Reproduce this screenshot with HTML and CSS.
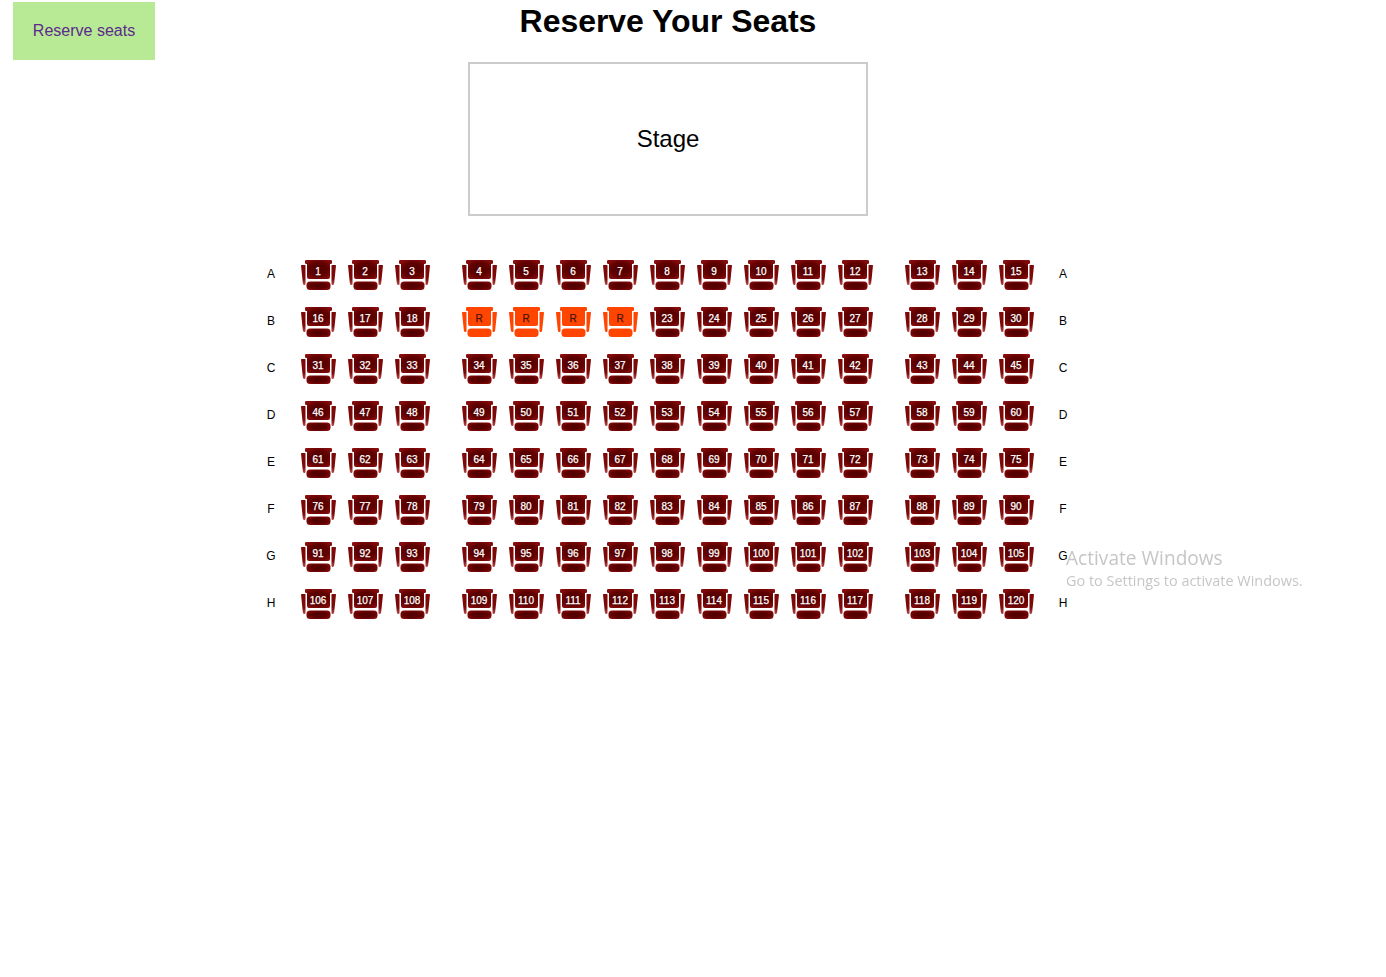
FILE: index.html
```html
<!DOCTYPE html>
<html lang="en">
<head>
    <meta charset="UTF-8">
    <meta name="viewport" content="width=device-width, initial-scale=1.0">
    <title>Reserve Your Seats</title>
    <link rel="stylesheet" href="styles.css">
</head>
<body>
    <!-- seat drawing, reused by every seat -->
    <svg class="defs" width="0" height="0" aria-hidden="true">
        <defs>
            <radialGradient id="seatFill" cx="50%" cy="50%" r="62%">
                <stop offset="0%" stop-color="#500000"/>
                <stop offset="55%" stop-color="#5e0000"/>
                <stop offset="100%" stop-color="#8c0e0e"/>
            </radialGradient>
            <linearGradient id="armFill" x1="0" y1="0" x2="0" y2="1">
                <stop offset="0%" stop-color="#7c0808"/>
                <stop offset="70%" stop-color="#7c0808"/>
                <stop offset="100%" stop-color="#b85050"/>
            </linearGradient>
            <symbol id="seatShape" viewBox="0 0 36 30">
                <path class="seat-back" d="M4 1.200Q4 0 5.200 0H29.800Q31 0 31 1.200V3Q31 4 29.500 4H29V17Q29 19 27 19H8Q6 19 6 17V4H5.500Q4 4 4 3Z"/>
                <path class="seat-arm" d="M0 5.600Q0 5 .6 5H3.900Q4.500 5 4.500 5.600V21Q4.800 24.500 4 25H3Q2 24.800 1.800 23Z"/>
                <path class="seat-arm" d="M35 5.600Q35 5 34.400 5H31.100Q30.500 5 30.500 5.600V21Q30.200 24.500 31 25H32Q33 24.800 33.200 23Z"/>
                <rect class="seat-cushion" x="5.500" y="21.500" width="24" height="8.500" rx="3.500"/>
            </symbol>
        </defs>
    </svg>

    <main class="page">
        <header class="top-bar">
            <button class="reserve-btn" type="button">Reserve seats</button>
            <h1 class="title">Reserve Your Seats</h1>
        </header>

        <div class="stage">Stage</div>

        <div id="seatMap" class="seat-map"></div>
    </main>

    <div class="watermark">
        <div class="watermark-title">Activate Windows</div>
        <div class="watermark-text">Go to Settings to activate Windows.</div>
    </div>

    <script src="script.js"></script>
</body>
</html>
```

FILE: styles.css
```css
body {
    margin: 0;
    padding: 0;
    font-family: "Liberation Sans", Arial, sans-serif;
    background-color: #fff;
    color: #000;
}

.defs {
    display: block;
    height: 0;
}

.page {
    width: 1336px;
}

.top-bar {
    display: grid;
    grid-template-columns: 1fr auto 1fr;
    align-items: start;
    height: 60px;
    padding-top: 2px;
    box-sizing: border-box;
}

.reserve-btn {
    width: 142px;
    height: 58px;
    margin-left: 13px;
    padding: 0;
    border: none;
    background-color: #b8e994;
    color: #5b2a8c;
    font-family: inherit;
    font-size: 16px;
    cursor: pointer;
}

.title {
    margin: 0;
    font-size: 32px;
    line-height: 38px;
    font-weight: bold;
    letter-spacing: -0.05px;
}

.stage {
    display: flex;
    align-items: center;
    justify-content: center;
    box-sizing: border-box;
    width: 400px;
    height: 154px;
    margin: 2px auto 0;
    border: 2px solid #ccc;
    font-size: 24px;
}

.seat-map {
    display: flex;
    flex-direction: column;
    gap: 17px;
    width: 820px;
    margin: 44px 0 0 257px;
}

.seat-row {
    display: flex;
    align-items: center;
    gap: 31px;
    height: 30px;
}

.row-label {
    width: 28px;
    padding-bottom: 2px;
    font-size: 12px;
    text-align: center;
}

.row-label.start {
    margin-right: -15px;
}

.row-label.end {
    margin-left: -17px;
}

.seat-group {
    display: flex;
    gap: 11px;
}

.seat {
    display: grid;
    width: 36px;
    height: 30px;
    justify-items: center;
    --body-fill: url(#seatFill);
    --arm-fill: url(#armFill);
    --num-color: #fff;
}

.seat.reserved {
    --body-fill: #ff4500;
    --arm-fill: #ff4500;
    --num-color: #4a1500;
}

.seat svg,
.seat-num {
    grid-area: 1 / 1;
}

.seat svg {
    width: 36px;
    height: 30px;
}

.seat-num {
    width: 34px;
    margin-right: 2px;
    padding-top: 6px;
    color: var(--num-color);
    font-size: 10px;
    line-height: 12px;
    text-align: center;
    -webkit-text-stroke: 0.25px var(--num-color);
}

.seat-back,
.seat-cushion {
    fill: var(--body-fill);
}

.seat-arm {
    fill: var(--arm-fill);
}

.watermark {
    position: fixed;
    left: 1066px;
    top: 544px;
    color: #c6c6c6;
    font-family: "Open Sans", sans-serif;
    white-space: nowrap;
}

.watermark-title {
    font-size: 19.1px;
    line-height: 29px;
}

.watermark-text {
    font-size: 14.45px;
    line-height: 15px;
}
```

FILE: script.js
```js
const rows = ['A', 'B', 'C', 'D', 'E', 'F', 'G', 'H'];
const groups = [3, 9, 3];
const reserved = [19, 20, 21, 22];

const map = document.getElementById('seatMap');
let seatNumber = 1;

function makeLabel(text, side) {
    const label = document.createElement('div');
    label.className = 'row-label ' + side;
    label.textContent = text;
    return label;
}

rows.forEach(function (letter) {
    const row = document.createElement('div');
    row.className = 'seat-row';
    row.appendChild(makeLabel(letter, 'start'));

    groups.forEach(function (count) {
        const group = document.createElement('div');
        group.className = 'seat-group';

        for (let i = 0; i < count; i++) {
            const isReserved = reserved.includes(seatNumber);
            const seat = document.createElement('div');
            seat.className = isReserved ? 'seat reserved' : 'seat';
            seat.innerHTML = '<svg><use href="#seatShape"></use></svg>' +
                '<span class="seat-num">' + (isReserved ? 'R' : seatNumber) + '</span>';
            group.appendChild(seat);
            seatNumber++;
        }

        row.appendChild(group);
    });

    row.appendChild(makeLabel(letter, 'end'));
    map.appendChild(row);
});
```
